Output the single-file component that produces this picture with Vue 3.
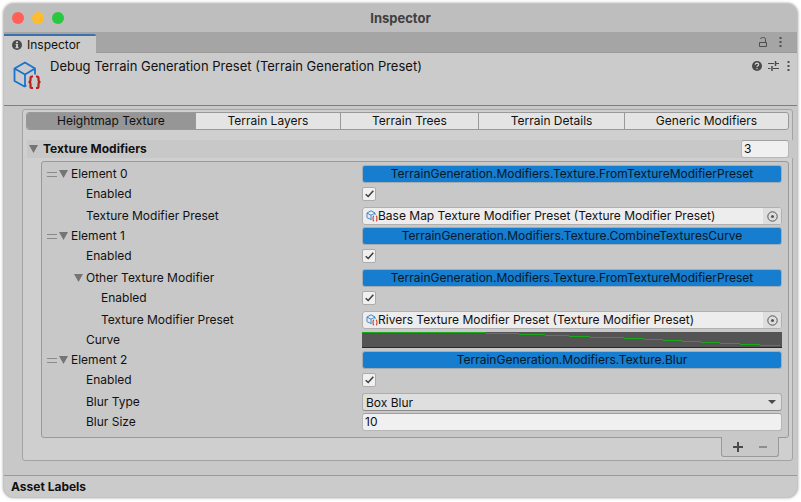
<script setup>
import { ref } from 'vue'

const tabs = [
  { name: 'Heightmap Texture', grow: 'w1' },
  { name: 'Terrain Layers', grow: 'w2' },
  { name: 'Terrain Trees', grow: 'w3' },
  { name: 'Terrain Details', grow: 'w4' },
  { name: 'Generic Modifiers', grow: 'w5' }
]
const activeTab = ref('Heightmap Texture')
const count = ref(3)

const rows = ref([
  { id: 'e0', kind: 'type', depth: 0, label: 'Element 0', value: 'TerrainGeneration.Modifiers.Texture.FromTextureModifierPreset' },
  { id: 'e0-on', kind: 'toggle', depth: 1, label: 'Enabled', value: true },
  { id: 'e0-preset', kind: 'object', depth: 1, label: 'Texture Modifier Preset', value: 'Base Map Texture Modifier Preset (Texture Modifier Preset)' },
  { id: 'e1', kind: 'type', depth: 0, label: 'Element 1', value: 'TerrainGeneration.Modifiers.Texture.CombineTexturesCurve' },
  { id: 'e1-on', kind: 'toggle', depth: 1, label: 'Enabled', value: true },
  { id: 'e1-other', kind: 'type', depth: 1, label: 'Other Texture Modifier', value: 'TerrainGeneration.Modifiers.Texture.FromTextureModifierPreset' },
  { id: 'e1-other-on', kind: 'toggle', depth: 2, label: 'Enabled', value: true },
  { id: 'e1-other-preset', kind: 'object', depth: 2, label: 'Texture Modifier Preset', value: 'Rivers Texture Modifier Preset (Texture Modifier Preset)' },
  { id: 'e1-curve', kind: 'curve', depth: 1, label: 'Curve' },
  { id: 'e2', kind: 'type', depth: 0, label: 'Element 2', value: 'TerrainGeneration.Modifiers.Texture.Blur' },
  { id: 'e2-on', kind: 'toggle', depth: 1, label: 'Enabled', value: true },
  { id: 'e2-type', kind: 'select', depth: 1, label: 'Blur Type', value: 'Box Blur' },
  { id: 'e2-size', kind: 'number', depth: 1, label: 'Blur Size', value: '10' }
])
</script>

<template>
  <main class="window">
    <header class="titlebar">
      <div class="lights">
        <i class="light red"></i><i class="light amber"></i><i class="light green"></i>
      </div>
      <h1>Inspector</h1>
    </header>

    <nav class="dock">
      <button type="button" class="dock-tab">
        <svg width="10" height="10" viewBox="0 0 10 10">
          <circle cx="5" cy="5" r="5" fill="#4a4a4a" />
          <path d="M4 1.6h2v1.6H4zM3.5 4.1H6v3.2h.7v1H3.3v-1H4V5h-.5z" fill="#cbcbcb" />
        </svg>
        Inspector
      </button>
      <div class="dock-tools">
        <button type="button" class="icon" aria-label="Lock">
          <svg width="10" height="12" viewBox="0 0 10 12" fill="none" stroke="#4f4f4f">
            <path d="M1.500 5.500h7v4h-7zM7.500 5.500V2.500Q7.500 .5 5.500 .5H4.500Q3 .5 2.500 2" />
          </svg>
        </button>
        <button type="button" class="icon" aria-label="Tab menu">
          <svg width="3" height="11" viewBox="0 0 3 11" fill="#4f4f4f"><path d="M.5 0h2v2h-2zM.5 4h2v2h-2zM.5 8h2v2h-2z" /></svg>
        </button>
      </div>
    </nav>

    <section class="asset">
      <svg class="asset-icon" width="30" height="30" viewBox="0 0 30 30" fill="none">
        <path d="M13.500 24.500L11.500 25.500L1.500 20V7.500L12 1.500L22 7.500V13.500M1.500 7.500L12 13.500L22 7.500M12 13.500V25" stroke="#1773cf" stroke-width="1.800" stroke-linejoin="round" />
        <path d="M20 15.500h-1q-1.500 0-1.500 1.500v2q0 2-2 2q2 0 2 2v2.500q0 1.500 1.500 1.500H20M23 15.500h1q1.500 0 1.500 1.500v2q0 2 2 2q-2 0-2 2v2.500q0 1.500-1.500 1.500H23" stroke="#b5211e" stroke-width="2.200" />
      </svg>
      <h2>Debug Terrain Generation Preset (Terrain Generation Preset)</h2>
      <div class="asset-tools">
        <button type="button" class="icon" aria-label="Help">
          <svg width="10" height="10" viewBox="0 0 10 10">
            <circle cx="5" cy="5" r="5" fill="#4a4a4a" />
            <path d="M3.200 3.800Q3.300 2.200 5 2.200Q6.700 2.300 6.700 3.600Q6.700 4.500 5.500 5Q5 5.300 5 6M5 7v1.200" fill="none" stroke="#d0d0d0" stroke-width="1.200" />
          </svg>
        </button>
        <button type="button" class="icon" aria-label="Presets">
          <svg width="11" height="10" viewBox="0 0 11 10" fill="none" stroke="#4a4a4a">
            <path d="M0 2.500h6M8 2.500h3M0 7.500h2.500M5 7.500h6" />
            <path d="M7.500 0v5M4 5v5" stroke-width="1.500" />
          </svg>
        </button>
        <button type="button" class="icon" aria-label="More">
          <svg width="3" height="11" viewBox="0 0 3 11" fill="#4f4f4f"><path d="M.5 0h2v2h-2zM.5 4h2v2h-2zM.5 8h2v2h-2z" /></svg>
        </button>
      </div>
    </section>

    <section class="body">
      <div class="panel">
        <div class="tabs" role="tablist">
          <button
            v-for="t in tabs" :key="t.name" type="button" role="tab" class="tab"
            :class="[t.grow, { active: t.name === activeTab }]"
            :aria-selected="t.name === activeTab" @click="activeTab = t.name"
          >{{ t.name }}</button>
        </div>

        <div class="list-head">
          <svg class="fold" width="9" height="8" viewBox="0 0 9 8"><path d="M0 0h9L4.500 8z" /></svg>
          <label for="count">Texture Modifiers</label>
          <input id="count" v-model="count" type="text" class="text count">
        </div>

        <div class="list">
          <div v-for="r in rows" :key="r.id" class="row" :class="['row-' + r.kind, 'depth' + r.depth]">
            <div class="name">
              <svg v-if="r.kind === 'type' && r.depth === 0" class="grip" width="10" height="5" viewBox="0 0 10 5"><path d="M0 .5h10M0 4.500h10" stroke="#8a8a8a" /></svg>
              <svg v-if="r.kind === 'type'" class="fold" width="9" height="8" viewBox="0 0 9 8"><path d="M0 0h9L4.500 8z" /></svg>
              <label :for="r.id">{{ r.label }}</label>
            </div>

            <button v-if="r.kind === 'type'" :id="r.id" type="button" class="type-button">{{ r.value }}</button>

            <span v-else-if="r.kind === 'toggle'" class="check">
              <input :id="r.id" v-model="r.value" type="checkbox">
              <svg v-if="r.value" width="9" height="8" viewBox="0 0 9 8"><path d="M.7 4.200L3.200 6.500L8.300 .8" fill="none" stroke="#3c3c3c" stroke-width="1.500" /></svg>
            </span>

            <div v-else-if="r.kind === 'object'" class="object">
              <svg width="12" height="12" viewBox="0 0 12 12" fill="none">
                <path d="M5.500 9.700L1 7.700V3L5 .8L9 3V5M1 3L5 5.300L9 3M5 5.300V9.500" stroke="#3f87cc" />
                <path d="M8 5.800Q7 6 7 8.500T8 11.300M10 5.800Q11 6 11 8.500T10 11.300" stroke="#c8423f" stroke-width="1.200" />
              </svg>
              <span>{{ r.value }}</span>
              <button :id="r.id" type="button" class="picker">
                <svg width="11" height="11" viewBox="0 0 11 11"><circle cx="5.500" cy="5.500" r="4.700" fill="none" stroke="#555" /><circle cx="5.500" cy="5.500" r="1.500" fill="#555" /></svg>
              </button>
            </div>

            <button v-else-if="r.kind === 'curve'" :id="r.id" type="button" class="curve">
              <svg viewBox="0 0 420 15" preserveAspectRatio="none">
                <path d="M0 .5H124M124 1.500H157M157 2.500H183M183 3.500H207M207 4.500H228M228 5.500H262M262 6.500H282M282 7.500H301M301 8.500H320M320 9.500H339M339 10.500H358M358 11.500H378M378 12.500H398M398 13.500H418" fill="none" stroke="#18a818" />
              </svg>
            </button>

            <div v-else-if="r.kind === 'select'" class="select">
              <select :id="r.id" v-model="r.value"><option>Box Blur</option></select>
              <svg width="8" height="4" viewBox="0 0 8 4"><path d="M0 0h8L4 4z" fill="#4a4a4a" /></svg>
            </div>

            <input v-else :id="r.id" v-model="r.value" type="text" class="text">
          </div>
        </div>

        <div class="list-foot">
          <button type="button" class="icon" aria-label="Add">
            <svg width="10" height="10" viewBox="0 0 10 10"><path d="M0 5h10M5 0v10" stroke="#4a4a4a" stroke-width="2" /></svg>
          </button>
          <button type="button" class="icon" aria-label="Remove">
            <svg width="8" height="10" viewBox="0 0 8 10"><path d="M0 5h8" stroke="#8e8e8e" stroke-width="2" /></svg>
          </button>
        </div>
      </div>
    </section>

    <footer class="labels">Asset Labels</footer>
  </main>
</template>

<style>
body {
  background: #fff;
}
</style>

<style scoped>
* {
  box-sizing: border-box;
}
.window {
  margin: 4px;
  border-radius: 10px;
  overflow: hidden;
  background: #c8c8c8;
  box-shadow: 0 0 0 1px #c4c4c4, 0 0 3px 1px #aaa;
  font-family: Inter, "Liberation Sans", sans-serif;
  font-size: 12px;
  line-height: 18px;
  color: #111;
}
button,
input,
select {
  font: inherit;
  color: inherit;
  margin: 0;
  padding: 0;
  border: 0;
  background: none;
}
svg {
  display: block;
  flex: none;
}
h1,
h2 {
  margin: 0;
}
.titlebar {
  display: grid;
  grid-template-columns: 1fr auto 1fr;
  align-items: center;
  height: 28px;
  padding: 0 8px;
  background: #bebebe;
}
.titlebar h1 {
  font-size: 13px;
  font-weight: 700;
  color: #404040;
}
.lights {
  display: flex;
  gap: 8px;
}
.light {
  width: 12px;
  height: 12px;
  border-radius: 50%;
}
.red {
  background: #ff5f57;
}
.amber {
  background: #febc2e;
}
.green {
  background: #28c840;
}
.dock {
  display: flex;
  justify-content: space-between;
  height: 21px;
  background: #a5a5a5;
  box-shadow: inset 0 -1px #999;
}
.dock-tab {
  display: flex;
  align-items: center;
  gap: 5px;
  margin-top: 2px;
  padding: 0 16px 0 8px;
  border-top: 2px solid #3a72b0;
  border-radius: 0 2px 0 0;
  background: #cbcbcb;
}
.dock-tools,
.asset-tools {
  display: flex;
  align-items: center;
}
.dock-tools {
  gap: 11px;
  padding-right: 15px;
}
.asset {
  display: flex;
  align-items: flex-start;
  height: 53px;
  padding: 3px 7px 0 9px;
  background: #cbcbcb;
  border-bottom: 1px solid #7f7f7f;
}
.asset-icon {
  margin-top: 5px;
}
.asset h2 {
  flex: 1;
  margin-left: 7px;
  font-size: 13px;
  font-weight: 400;
  line-height: 20px;
}
.asset-tools {
  gap: 6px;
  height: 20px;
}
.asset-tools .icon:last-child {
  margin-left: 2px;
}
.body {
  padding: 3px 4px 14px 18px;
}
.panel {
  padding: 2px 3px 3px;
  border: 1px solid #a3a3a3;
  border-radius: 3px;
  background: #cfcfcf;
}
.tabs {
  display: flex;
  height: 18px;
  border: 1px solid #999;
  border-radius: 3px;
  overflow: hidden;
  background: #e4e4e4;
}
.tab {
  flex: 1 1 0;
  min-width: 0;
  line-height: 16px;
  white-space: nowrap;
}
.tab + .tab {
  border-left: 1px solid #999;
}
.tab.active {
  background: #969696;
}
.w1 {
  flex-grow: 169;
}
.w2 {
  flex-grow: 145;
}
.w3 {
  flex-grow: 138;
}
.w4 {
  flex-grow: 146;
}
.w5 {
  flex-grow: 164;
}
.list-head {
  display: flex;
  align-items: center;
  height: 18px;
  margin: 10px -4px 3px 1px;
  padding: 0 4px 0 2px;
  background: #c8c8c8;
}
.list-head label {
  flex: 1;
  margin-left: 5px;
  font-weight: 700;
}
.fold {
  fill: #757575;
}
.text {
  width: 100%;
  height: 18px;
  padding: 0 2px;
  border: 1px solid #b7b7b7;
  border-top-color: #a0a0a0;
  border-radius: 3px;
  background: #f0f0f0;
}
.count {
  width: 48px;
}
.list {
  display: flex;
  flex-direction: column;
  gap: 2px;
  margin-left: 15px;
  padding: 3px 6px 6px 5px;
  border: 1px solid #999;
  border-radius: 3px;
  background: #c8c8c8;
}
.row {
  display: grid;
  grid-template-columns: 315px minmax(0, 1fr);
  align-items: center;
  height: 18px;
}
.row-toggle {
  margin-bottom: 2px;
}
.name {
  display: flex;
  align-items: center;
}
.grip {
  margin-right: 2px;
}
.name .fold {
  margin-right: 3px;
}
.depth1 .name {
  padding-left: 39px;
}
.depth1.row-type .name {
  padding-left: 27px;
}
.depth2 .name {
  padding-left: 54px;
}
.type-button {
  height: 18px;
  border: 1px solid #a3adb5;
  border-radius: 3px;
  background: #167dcf;
  color: #06182a;
  line-height: 16px;
  white-space: nowrap;
  overflow: hidden;
}
.check {
  display: grid;
  place-items: center;
  width: 14px;
  height: 14px;
}
.check > * {
  grid-area: 1 / 1;
}
.check input {
  appearance: none;
  width: 14px;
  height: 14px;
  border: 1px solid #acacac;
  border-radius: 2px;
  background: #f0f0f0;
}
.check svg {
  pointer-events: none;
}
.object {
  display: flex;
  align-items: center;
  height: 18px;
  padding-left: 3px;
  border: 1px solid #b0b0b0;
  border-radius: 3px;
  overflow: hidden;
  background: #ededed;
}
.object span {
  flex: 1;
  line-height: 16px;
  white-space: nowrap;
  overflow: hidden;
}
.picker {
  display: grid;
  place-items: center;
  width: 18px;
  height: 16px;
  background: #dedede;
}
.curve {
  height: 16px;
  border-bottom: 1px solid #282828;
  background: #545454;
}
.curve svg {
  width: 100%;
  height: 15px;
}
.select {
  display: grid;
  align-items: center;
}
.select > * {
  grid-area: 1 / 1;
}
.select select {
  appearance: none;
  width: 100%;
  height: 18px;
  padding: 0 3px;
  border: 1px solid #adadad;
  border-bottom-color: #8c8c8c;
  border-radius: 3px;
  background: #dfdfdf;
}
.select svg {
  justify-self: end;
  margin-right: 6px;
  pointer-events: none;
}
.list-foot {
  display: flex;
  justify-content: center;
  gap: 16px;
  width: 58px;
  height: 20px;
  margin: -1px 10px 0 auto;
  border: 1px solid #999;
  border-top: 0;
  border-radius: 0 0 3px 3px;
  background: #c8c8c8;
}
.labels {
  height: 22px;
  padding-left: 7px;
  border-top: 1px solid #999;
  background: #cbcbcb;
  font-weight: 700;
  line-height: 21px;
}
</style>
